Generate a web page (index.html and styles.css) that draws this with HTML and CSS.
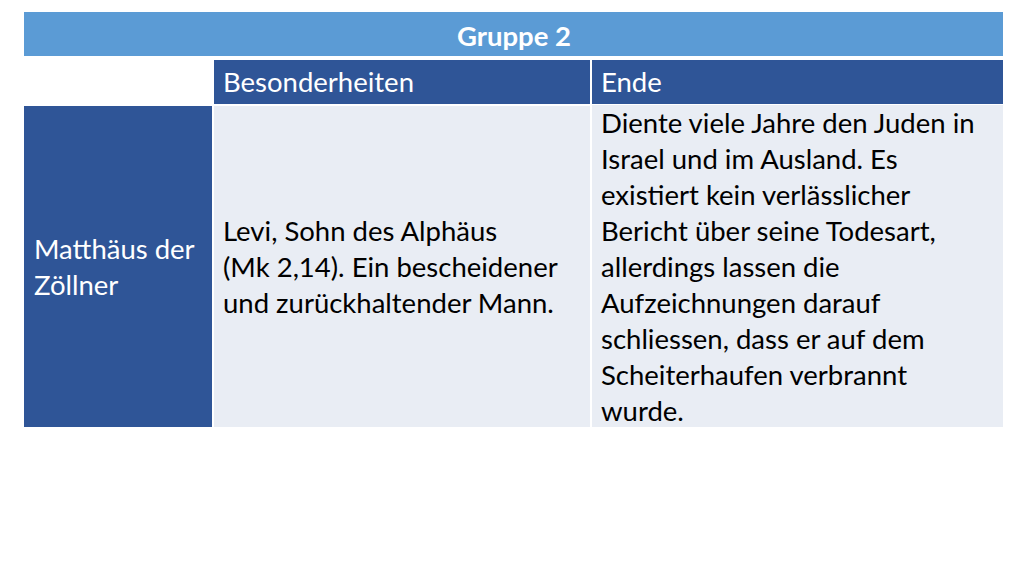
FILE: index.html
```html
<!DOCTYPE html>
<html lang="de">
<head>
<meta charset="utf-8">
<title>Gruppe 2</title>
<link rel="stylesheet" href="styles.css">
</head>
<body>
<div class="table">
  <div class="cell title">Gruppe 2</div>
  <div class="cell blank"></div>
  <div class="cell head">Besonderheiten</div>
  <div class="cell head">Ende</div>
  <div class="cell name">Matthäus der<br>Zöllner</div>
  <div class="cell body mid">Levi, Sohn des Alphäus<br>(Mk 2,14). Ein bescheidener<br>und zurückhaltender Mann.</div>
  <div class="cell body top">Diente viele Jahre den Juden in<br>Israel und im Ausland. Es<br>existiert kein verlässlicher<br>Bericht über seine Todesart,<br>allerdings lassen die<br>Aufzeichnungen darauf<br>schliessen, dass er auf dem<br>Scheiterhaufen verbrannt<br>wurde.</div>
</div>
</body>
</html>
```
FILE: styles.css
```css
html, body {
  margin: 0;
  padding: 0;
  background: #ffffff;
}
body {
  padding: 12px 0 0 24px;
  font-family: Lato, "Open Sans", sans-serif;
}
.table {
  display: grid;
  grid-template-columns: 188px 376px 411px;
  grid-template-rows: 46px 44px 321px;
  column-gap: 2px;
  row-gap: 2px;
  width: 979px;
}
.cell {
  font-size: 27.5px;
  line-height: 36px;
  padding: 0 8px 0 9px;
  white-space: nowrap;
}
.title {
  grid-column: 1 / 4;
  align-self: start;
  box-sizing: border-box;
  height: 44px;
  padding-top: 3px;
  background: #5b9bd5;
  color: #ffffff;
  font-weight: bold;
  display: flex;
  align-items: center;
  justify-content: center;
}
.blank {
  background: #ffffff;
}
.head {
  background: #2f5597;
  color: #ffffff;
  display: flex;
  align-items: center;
}
.name {
  background: #2f5597;
  color: #ffffff;
  display: flex;
  align-items: center;
  padding-left: 10px;
}
.body {
  background: #e9edf4;
  color: #000000;
  display: flex;
}
.mid {
  align-items: center;
}
.top {
  align-items: flex-start;
  padding-top: 0;
  margin-top: -1px;
}
```
